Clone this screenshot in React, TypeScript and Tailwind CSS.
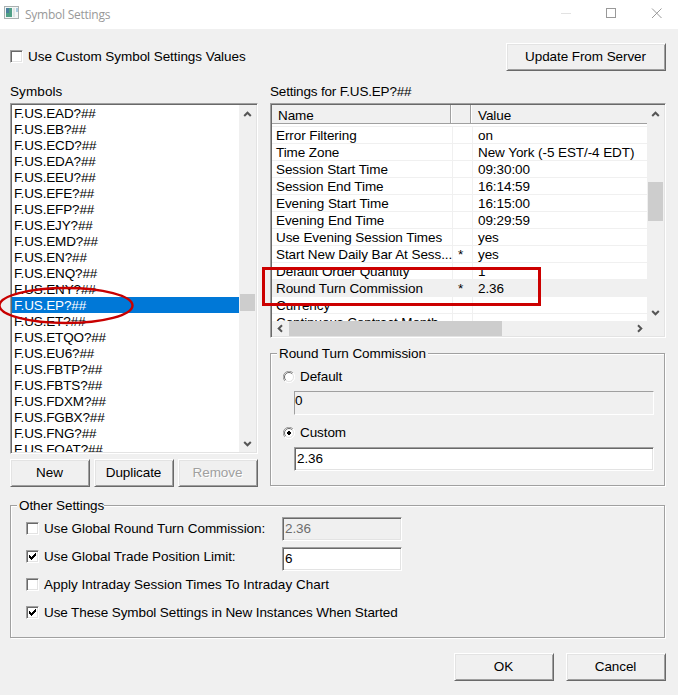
import type { ReactNode } from "react";

const SYMBOLS = [
  "F.US.EAD?##",
  "F.US.EB?##",
  "F.US.ECD?##",
  "F.US.EDA?##",
  "F.US.EEU?##",
  "F.US.EFE?##",
  "F.US.EFP?##",
  "F.US.EJY?##",
  "F.US.EMD?##",
  "F.US.EN?##",
  "F.US.ENQ?##",
  "F.US.ENY?##",
  "F.US.EP?##",
  "F.US.ET?##",
  "F.US.ETQO?##",
  "F.US.EU6?##",
  "F.US.FBTP?##",
  "F.US.FBTS?##",
  "F.US.FDXM?##",
  "F.US.FGBX?##",
  "F.US.FNG?##",
  "F.US.FOAT?##",
];

const SELECTED_SYMBOL = "F.US.EP?##";

interface Setting {
  name: string;
  value: string;
  changed?: boolean;
  selected?: boolean;
}

const SETTINGS: Setting[] = [
  { name: "Error Filtering", value: "on" },
  { name: "Time Zone", value: "New York (-5 EST/-4 EDT)" },
  { name: "Session Start Time", value: "09:30:00" },
  { name: "Session End Time", value: "16:14:59" },
  { name: "Evening Start Time", value: "16:15:00" },
  { name: "Evening End Time", value: "09:29:59" },
  { name: "Use Evening Session Times", value: "yes" },
  { name: "Start New Daily Bar At Sess...", value: "yes", changed: true },
  { name: "Default Order Quantity", value: "1" },
  { name: "Round Turn Commission", value: "2.36", changed: true, selected: true },
  { name: "Currency", value: "" },
  { name: "Continuous Contract Month", value: "" },
];

// Two-tone bevels of the classic Windows controls
const SUNKEN =
  "border border-t-[#a0a0a0] border-l-[#a0a0a0] border-b-white border-r-white p-px shadow-[inset_1px_1px_0_#696969,inset_-1px_-1px_0_#e3e3e3]";
const RAISED =
  "border border-t-white border-l-white border-b-[#696969] border-r-[#696969] shadow-[inset_1px_1px_0_#e3e3e3,inset_-1px_-1px_0_#a0a0a0]";

function Button({ children, className, disabled }: { children: ReactNode; className: string; disabled?: boolean }) {
  return (
    <button
      disabled={disabled}
      className={`flex h-7 items-center justify-center bg-[#f0f0f0] pr-px pb-px ${RAISED} ${className} ${
        disabled ? "text-[#a0a0a0] [text-shadow:1px_1px_0_#fff]" : ""
      }`}
    >
      {children}
    </button>
  );
}

function Checkbox({ label, checked, className = "" }: { label: string; checked?: boolean; className?: string }) {
  return (
    <label className="flex h-[13px] items-center whitespace-nowrap">
      <span className={`mr-[5px] h-[13px] w-[13px] shrink-0 bg-white ${SUNKEN}`}>
        {checked && (
          <svg className="block" width="9" height="9" viewBox="0 0 9 9" shapeRendering="crispEdges">
            <path d="M1 3h1v1h1v1h1v-1h1v-1h1v-1h1v-1h1v3h-1v1h-1v1h-1v1h-1v1h-1v-1h-1v-1h-1z" />
          </svg>
        )}
      </span>
      <span className={className}>{label}</span>
    </label>
  );
}

function Radio({ label, checked }: { label: string; checked?: boolean }) {
  return (
    <label className="flex h-3 items-center">
      <svg className="mr-[5px]" width="12" height="12" viewBox="0 0 12 12">
        <circle cx="6" cy="6" r="5" fill="#fff" />
        <path d="M1.9 10.1A5.5 5.5 0 0 1 10.1 1.9" fill="none" stroke="#a0a0a0" />
        <path d="M2.8 9.2A4.5 4.5 0 0 1 9.2 2.8" fill="none" stroke="#696969" />
        <path d="M2.8 9.2A4.5 4.5 0 0 0 9.2 2.8" fill="none" stroke="#e3e3e3" />
        <path d="M1.9 10.1A5.5 5.5 0 0 0 10.1 1.9" fill="none" stroke="#fff" />
        {checked && <path d="M5 4h2v1h1v2h-1v1h-2v-1h-1v-2h1z" shapeRendering="crispEdges" />}
      </svg>
      <span>{label}</span>
    </label>
  );
}

function Group({ title, titleClass, className, children }: { title: string; titleClass: string; className: string; children: ReactNode }) {
  return (
    <section className={`border border-[#a0a0a0] shadow-[1px_1px_0_#fff,inset_1px_1px_0_#fff] ${className}`}>
      <h2 className={`-mt-[9px] ml-[6px] h-4 bg-[#f0f0f0] pl-[2px] leading-[18px] whitespace-nowrap ${titleClass}`}>{title}</h2>
      {children}
    </section>
  );
}

function Arrow({ className = "" }: { className?: string }) {
  return (
    <svg className={className} width="9" height="7" viewBox="0 0 9 7" fill="none" stroke="#555" strokeWidth="2">
      <path d="M1.2 5L4.5 1.7L7.8 5" />
    </svg>
  );
}

export default function App() {
  return (
    <div className="relative h-[695px] w-[678px] overflow-hidden bg-[#f0f0f0] font-['Liberation_Sans',Arial,sans-serif] text-[13.5px] leading-4 tracking-[-0.08px] text-black">
      {/* Title bar */}
      <header className="flex h-[29px] items-center bg-white pl-1">
        <svg className="-mt-1" width="15" height="13" viewBox="0 0 15 13" shapeRendering="crispEdges">
          <rect x="0.5" y="0.5" width="14" height="12" fill="#f4f6f6" stroke="#a9b0b0" />
          <rect x="2" y="2" width="6" height="9" fill="#4f9f86" />
          <rect x="2" y="2" width="3" height="5" fill="#4a7f9c" />
          <rect x="9" y="2" width="2" height="9" fill="#dde5e5" />
          <rect x="12" y="2" width="2" height="4" fill="#a9cbe0" />
        </svg>
        <h1 className="ml-[6px] flex-1 font-['Open_Sans',sans-serif] text-[12px] tracking-[-0.25px] text-[#999]">
          Symbol Settings
        </h1>
        <svg className="-mt-[2px] mr-4" width="101" height="11" viewBox="0 0 101 11" fill="none">
          <path d="M0 5.5h10" stroke="#e2e2e2" />
          <rect x="45.5" y="0.5" width="9" height="9" stroke="#999" />
          <path d="M91 0.5l9.5 9.5M100.5 0.5l-9.5 9.5" stroke="#999" />
        </svg>
      </header>

      <main className="pt-[14px] pr-3 pl-[10px]">
        <div className="flex justify-between">
          <div className="pt-[7px]">
            <Checkbox label="Use Custom Symbol Settings Values" className="tracking-[-0.06px]" />
          </div>
          <Button className="w-40">Update From Server</Button>
        </div>

        <div className="flex gap-3">
          <div className="w-[248px]">
            <h2 className="mt-[13px] mb-[3px] tracking-[0.1px]">Symbols</h2>
            <div className={`flex h-[351px] bg-white ${SUNKEN}`}>
              <ul className="flex-1 overflow-hidden tracking-[-0.15px]">
                {SYMBOLS.map((symbol) => (
                  <li
                    key={symbol}
                    className={`h-4 pl-[2px] leading-[18px] ${symbol === SELECTED_SYMBOL ? "bg-[#0078d7] text-white" : ""}`}
                  >
                    {symbol}
                  </li>
                ))}
              </ul>
              <div className="flex w-[17px] flex-col items-center bg-[#f0f0f0] pt-[6px] pb-[5px]">
                <Arrow />
                <div className="mt-44 h-[17px] w-[15px] bg-[#cdcdcd]" />
                <Arrow className="mt-auto rotate-180" />
              </div>
            </div>
            <div className="mt-[5px] flex gap-1">
              <Button className="w-20">New</Button>
              <Button className="w-20">Duplicate</Button>
              <Button className="w-20" disabled>
                Remove
              </Button>
            </div>
          </div>

          <div className="w-[396px]">
            <h2 className="mt-[13px] mb-[3px] tracking-[-0.18px]">Settings for F.US.EP?##</h2>
            <div className={`h-[235px] bg-white ${SUNKEN}`}>
              <div className="flex h-[216px]">
                <div className="flex-1 overflow-hidden">
                  <div className="flex h-[19px] border-b border-[#a0a0a0] bg-[#f0f0f0] pt-px leading-5">
                    <div className="-mt-px w-[179px] border-r border-[#a0a0a0] pt-px pl-[6px]">Name</div>
                    <div className="-mt-px w-5 border-r border-l border-r-[#a0a0a0] border-l-white" />
                    <div className="-mt-px flex-1 border-l border-white pt-px pl-[6px]">Value</div>
                  </div>
                  <div className="h-[3px] border-b border-[#f0f0f0]" />
                  {SETTINGS.map(({ name, value, changed, selected }) => (
                    <div
                      key={name}
                      className={`flex h-[17px] border-b border-[#f0f0f0] leading-[17px] whitespace-nowrap ${selected ? "bg-[#f0f0f0]" : ""}`}
                    >
                      <div className="w-[181px] border-r border-[#f0f0f0] pl-1">{name}</div>
                      <div className="w-5 border-r border-[#f0f0f0] pl-[5px]">{changed ? "*" : ""}</div>
                      <div className="pl-[5px]">{value}</div>
                    </div>
                  ))}
                </div>
                <div className="flex w-[17px] flex-col items-center bg-[#f0f0f0] pt-[6px] pb-[5px]">
                  <Arrow />
                  <div className="mt-16 h-[39px] w-[15px] bg-[#cdcdcd]" />
                  <Arrow className="mt-auto rotate-180" />
                </div>
              </div>
              <div className="flex h-[15px] items-center bg-[#f0f0f0] pr-5 pl-1">
                <Arrow className="-rotate-90" />
                <div className="ml-1 h-[15px] w-[213px] bg-[#cdcdcd]" />
                <Arrow className="ml-auto rotate-90" />
              </div>
            </div>

            <Group title="Round Turn Commission" titleClass="w-[151px]" className="mt-[15px] h-[133px] w-[395px]">
              <div className="pt-[10px] pr-[10px] pl-3">
                <Radio label="Default" />
                <div className="mt-2 ml-[11px] h-6 border border-t-[#a0a0a0] border-l-[#a0a0a0] border-b-white border-r-white pt-px">
                  0
                </div>
                <div className="mt-3">
                  <Radio label="Custom" checked />
                </div>
                <div className={`mt-2 ml-[11px] h-6 bg-white ${SUNKEN}`}>
                  <div className="pt-[2px] pl-px">2.36</div>
                </div>
              </div>
            </Group>
          </div>
        </div>

        <Group title="Other Settings" titleClass="w-[87px]" className="mt-[18px] flex h-[133px] w-[655px] flex-col">
          <div className="flex pt-[9px] pl-[15px]">
            <div className="flex w-64 flex-col gap-[15px]">
              <Checkbox label="Use Global Round Turn Commission:" className="tracking-[-0.05px]" />
              <Checkbox label="Use Global Trade Position Limit:" checked className="tracking-[-0.04px]" />
              <Checkbox label="Apply Intraday Session Times To Intraday Chart" className="tracking-[0px]" />
              <Checkbox label="Use These Symbol Settings in New Instances When Started" checked className="tracking-[-0.1px]" />
            </div>
            <div className="-mt-[5px] flex w-[120px] flex-col gap-[6px]">
              <div className={`h-6 text-[#6d6d6d] ${SUNKEN}`}>
                <div className="pt-[2px] pl-px">2.36</div>
              </div>
              <div className={`h-6 bg-white ${SUNKEN}`}>
                <div className="pt-[2px] pl-px">6</div>
              </div>
            </div>
          </div>
        </Group>

        <div className="mt-[15px] flex justify-end gap-3">
          <Button className="w-[100px]">OK</Button>
          <Button className="w-[100px]">Cancel</Button>
        </div>
      </main>

      {/* Red annotations over the dialog */}
      <svg className="absolute top-[285px] left-0" width="136" height="42" viewBox="0 0 136 42" fill="none">
        <ellipse cx="66" cy="20.5" rx="66.5" ry="17.5" stroke="#c80000" strokeWidth="2.4" />
      </svg>
      <div className="absolute top-[267px] left-[262px] h-[39px] w-[279px] border-3 border-[#cc0000]" />
    </div>
  );
}
